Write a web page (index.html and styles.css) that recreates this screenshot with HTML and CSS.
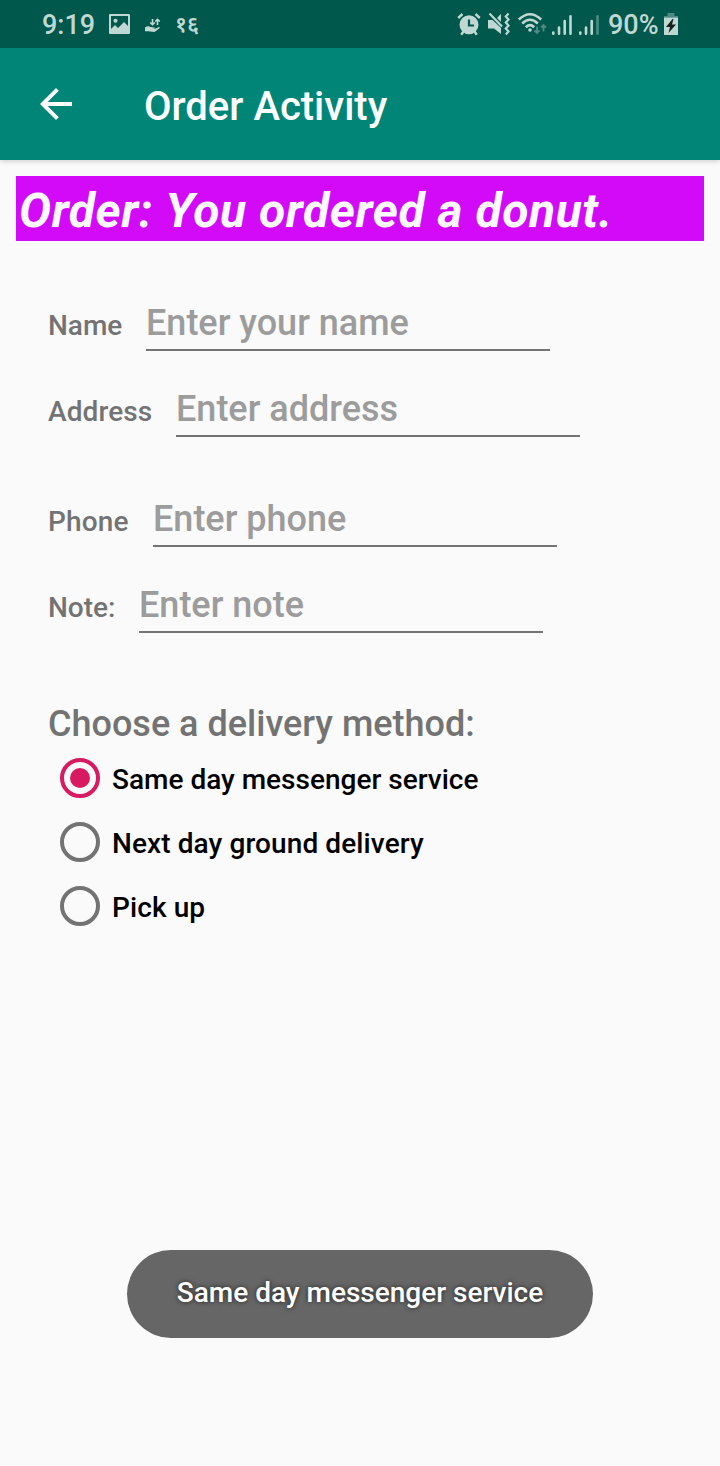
FILE: index.html
```
<!DOCTYPE html>
<html lang="en">
<head>
<meta charset="utf-8">
<title>Order Activity</title>
<link rel="stylesheet" href="styles.css">
</head>
<body>
<div class="screen">
  <div class="status">
    <span class="status-text clock">9:19</span>
    <svg class="icon-picture" width="22" height="20" viewBox="0 0 22 20"><path fill="currentColor" fill-rule="evenodd" d="M1 0h19q1 0 1 1v18q0 1-1 1H1q-1 0-1-1V1q0-1 1-1zM2 2v13l4-4 3 3 6-6 4 4V2z"/><circle cx="6.500" cy="6.800" r="2" fill="currentColor"/></svg>
    <svg class="icon-data" width="16" height="14" viewBox="0 0 16 14"><g fill="none" stroke="currentColor" stroke-width="1.600"><path d="M7.500 1v5.500M5.200 4.500l2.300 2.200 2.300-2.200M12.500 7v-5.500M10.200 3.500l2.300-2.200 2.300 2.200"/></g><path fill="currentColor" d="M0 9.500q3-2.300 5.500-.5l4 .4q.8.900-.3 1.400H7l2.500.1 4.500-2q1.400.2.500 1.300L9.500 14 3 13.200H0z"/></svg>
    <span class="date">१६</span>
    <span class="spacer"></span>
    <svg class="icon-alarm" width="24" height="24" viewBox="0 0 24 24"><g fill="none" stroke="currentColor" stroke-width="2.400"><path d="M1.200 6L5.500 2M22.800 6L18.500 2M6.500 19.500L4.200 22.800M17.500 19.500l2.300 3.300"/></g><circle cx="12" cy="12.700" r="9.500" fill="currentColor"/><path class="cut" d="M12 7.500v6h5"/></svg>
    <svg class="icon-mute" width="22" height="24" viewBox="0 0 22 24"><path fill="currentColor" d="M0 8h4.500L13 16v6l-7-5.500H0zM9 6l4-4.200V10z"/><path d="M1.500 1.500L14 14.500" stroke="currentColor" stroke-width="2.200"/><path fill="none" stroke="currentColor" stroke-width="2.200" d="M20.500 1.500l-2.700 3 2.700 3-2.700 3 2.700 3-2.700 3 2.700 3-2.700 3"/></svg>
    <svg class="icon-wifi" width="28" height="24" viewBox="0 0 28 24"><g fill="none" stroke="currentColor" stroke-width="2.600"><path d="M.8 7.500q11.200-10.500 22.400 0M4.200 11.500q7.800-7.500 15.600 0M7.800 15.200q4.200-4 8.400 0"/></g><circle cx="12" cy="18" r="1.800" fill="currentColor"/><g class="faint" fill="none" stroke="currentColor" stroke-width="1.800"><path d="M19 14.500v6.500M16.500 18.500L19 21l2.500-2.500M25.500 19.500V13M23 15.500l2.500-2.500 2.500 2.500"/></g></svg>
    <svg class="icon-signal" width="20" height="20" viewBox="0 0 20 20"><g stroke="currentColor" stroke-width="2.600" stroke-linecap="round"><path d="M1.300 17.500v1.200M7 12.500v6.200M12.700 6v12.700M18.500 1.300v17.400"/></g></svg>
    <svg class="icon-signal2" width="20" height="20" viewBox="0 0 20 20"><g stroke="currentColor" stroke-width="2.600" stroke-linecap="round"><path d="M1.300 17.500v1.200M7 12.500v6.200M12.700 6v12.700"/><path class="faint" d="M18.500 1.300v17.400"/></g></svg>
    <span class="status-text percent">90%</span>
    <svg class="icon-battery" width="14" height="22" viewBox="0 0 14 22"><path class="faint" fill="currentColor" d="M3.500 0h7v3H14v1.500H0V3h3.500z"/><path fill="currentColor" d="M0 4.500h14V22H0z"/><path class="bolt" d="M8.500 6L2 14h4l-1.500 6L12 11.500H8L9.500 6z"/></svg>
  </div>
  <div class="appbar">
    <svg class="back" width="32" height="32" viewBox="0 0 32 32"><path fill="#fff" d="M32 14H7.660L18.840 2.820 16 0 0 16l16 16 2.820-2.820L7.660 18H32z"/></svg>
    <span class="title">Order Activity</span>
  </div>
  <div class="order">Order: You ordered a donut.</div>
  <div class="form">
    <div class="field"><span class="label name">Name</span><span class="input"><span class="hint">Enter your name</span></span></div>
    <div class="field"><span class="label address">Address</span><span class="input"><span class="hint">Enter address</span></span></div>
    <div class="field spaced"><span class="label phone">Phone</span><span class="input"><span class="hint">Enter phone</span></span></div>
    <div class="field"><span class="label note">Note:</span><span class="input"><span class="hint">Enter note</span></span></div>
    <div class="choose">Choose a delivery method:</div>
    <div class="option"><span class="radio checked"></span><span class="option-text">Same day messenger service</span></div>
    <div class="option"><span class="radio"></span><span class="option-text loose">Next day ground delivery</span></div>
    <div class="option"><span class="radio"></span><span class="option-text loose">Pick up</span></div>
  </div>
  <div class="toast"><span>Same day messenger service</span></div>
</div>
</body>
</html>
```
FILE: styles.css
```
* { box-sizing: border-box; }
body { margin: 0; background: #fafafa; font-family: Roboto, sans-serif; font-weight: 500; }
.screen { position: relative; width: 720px; height: 1466px; overflow: hidden; background: #fafafa; white-space: nowrap; }
svg { flex: none; display: block; }

.status { position: relative; z-index: 1; display: flex; align-items: flex-start; height: 48px; padding: 0 42px; background: #00574b; color: #bfd8d4; }
.status svg { overflow: visible; }
.status-text { font-size: 27px; line-height: 32px; margin-top: 9px; }
.clock { width: 53px; }
.icon-picture { margin: 14px 0 0 14px; }
.icon-data { margin: 18px 0 0 14px; }
.date { margin: 9px 0 0 14px; font: 600 22px/28px "Noto Sans", sans-serif; }
.spacer { flex: 1; }
.icon-alarm { margin-top: 12px; }
.icon-mute { margin: 12px 0 0 7px; }
.icon-wifi { margin: 12px 0 0 8px; }
.icon-signal { margin: 15px 0 0 6px; }
.icon-signal2 { margin: 15px 0 0 7px; }
.percent { width: 49px; margin-left: 9px; }
.icon-battery { margin: 13px 0 0 7px; }
.faint { opacity: .4; }
.cut { fill: none; stroke: #00574b; stroke-width: 2.2; }
.bolt { fill: #16211f; }

.appbar { position: relative; display: flex; height: 112px; padding-left: 40px; background: #008577; box-shadow: 0 1px 6px rgba(0,0,0,.2); }
.back { margin-top: 40px; }
.title { margin: 35px 0 0 72px; font-size: 40px; line-height: 48px; color: #fff; }

.order { height: 65px; margin: 16px 16px 0; padding-left: 3px; background: #d30af7; color: #fafafa; font-size: 48px; font-weight: 700; font-style: italic; line-height: 70px; letter-spacing: .57px; }

.form { padding: 45px 48px 0; }
.field { display: flex; height: 65px; margin-bottom: 21px; color: #737373; }
.spaced { margin-top: 45px; }
.label { flex: none; margin-right: 24px; font-size: 28px; line-height: 34px; padding-top: 23px; }
.input { display: flex; align-items: flex-start; width: 404px; height: 65px; border-bottom: 2px solid #747474; padding-top: 16px; }
.hint { font-size: 36px; line-height: 42px; color: #9c9c9c; }
.name { width: 74px; }
.address { width: 104px; letter-spacing: .1px; }
.phone { width: 81px; letter-spacing: .15px; }
.note { width: 67px; }

.choose { margin-top: 69px; font-size: 36px; line-height: 44px; color: #737373; }
.option { display: flex; align-items: center; height: 64px; padding-left: 12px; color: #000; }
.radio { display: flex; align-items: center; justify-content: center; width: 40px; height: 40px; border: 4px solid #737373; border-radius: 50%; }
.checked { border-color: #d81b60; }
.checked::before { content: ""; width: 20px; height: 20px; border-radius: 50%; background: #d81b60; }
.option-text { margin: 3px 0 0 12px; font-size: 28px; line-height: 34px; }
.loose { letter-spacing: .1px; }

.toast { position: absolute; left: 127px; top: 1250px; display: flex; justify-content: center; width: 466px; height: 88px; padding-top: 26px; border-radius: 44px; background: #666; color: #fff; font-size: 28px; line-height: 34px; text-shadow: 0 0 5px rgba(0,0,0,.7); }
```
